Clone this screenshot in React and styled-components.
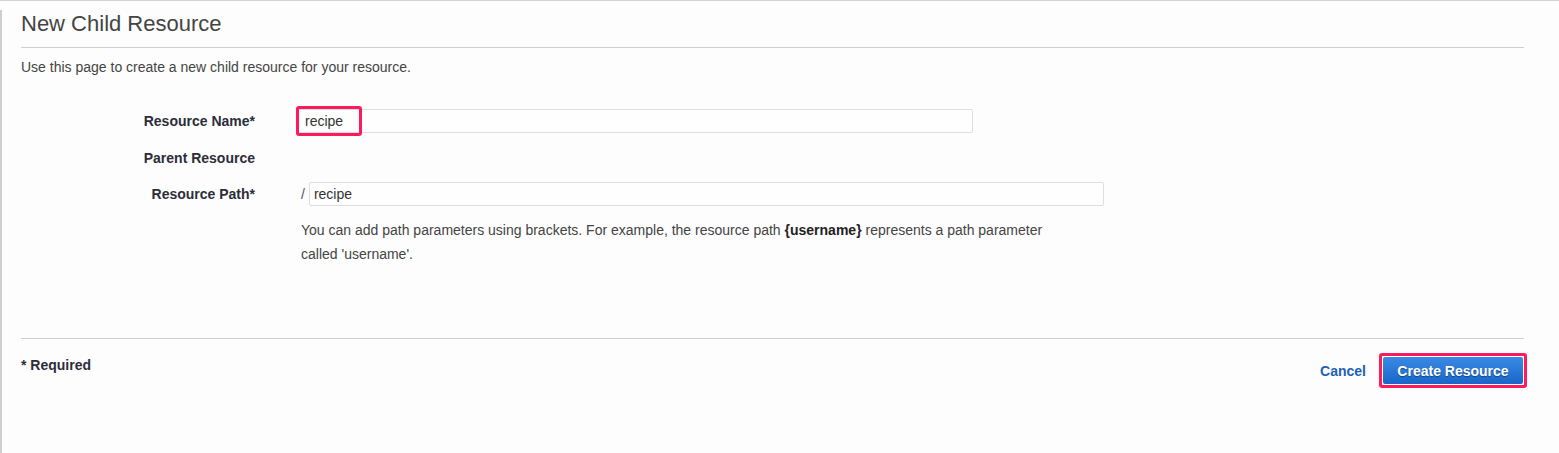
import styled, { createGlobalStyle } from "styled-components";

const GlobalStyle = createGlobalStyle`
  html, body {
    margin: 0;
    padding: 0;
    background: #fcfdfc;
    font-family: "Liberation Sans", Arial, sans-serif;
    color: #444;
  }
`;

const App = () => {
  return (
    <Page>
      <GlobalStyle />
      <Panel>
        <Title>New Child Resource</Title>
        <Intro>Use this page to create a new child resource for your resource.</Intro>
        <Form>
          <Label>Resource Name*</Label>
          <Field $height="38px">
            <Input $width="676px">
              <Highlight>recipe</Highlight>
            </Input>
          </Field>

          <Label>Parent Resource</Label>
          <Field $height="36px" />

          <Label>Resource Path*</Label>
          <Field $height="36px">
            <Slash>/</Slash>
            <Input $width="795px">
              <Value>recipe</Value>
            </Input>
          </Field>

          <span />
          <Help>
            You can add path parameters using brackets. For example, the resource path{" "}
            <b>{"{username}"}</b> represents a path parameter
            <br />
            called 'username'.
          </Help>
        </Form>
        <Footer>
          <Required>* Required</Required>
          <Actions>
            <Cancel href="#">Cancel</Cancel>
            <Outline>
              <PrimaryButton type="button">Create Resource</PrimaryButton>
            </Outline>
          </Actions>
        </Footer>
      </Panel>
    </Page>
  );
};

export default App;

const Page = styled.div`
  width: 1559px;
  height: 453px;
  border-top: 1px solid #d2d2d2;
  box-sizing: border-box;
  overflow: hidden;
`;

const Panel = styled.div`
  margin-top: 9px;
  height: 443px;
  border-left: 2px solid #cfcfcf;
  padding: 0 35px 0 19px;
`;

const Title = styled.h1`
  margin: 0;
  font-size: 22px;
  font-weight: 400;
  line-height: 28px;
  color: #444;
  padding-bottom: 9px;
  border-bottom: 1px solid #cfcfcf;
`;

const Intro = styled.p`
  margin: 11px 0 0;
  font-size: 14px;
  line-height: 17px;
  color: #444;
`;

const Form = styled.div`
  display: grid;
  grid-template-columns: 234px 1fr;
  column-gap: 42px;
  margin-top: 26px;
  align-items: center;
`;

const Label = styled.div`
  text-align: right;
  font-size: 14px;
  font-weight: 700;
  color: #2d2d3a;
`;

const Field = styled.div`
  display: flex;
  align-items: center;
  height: ${(p) => p.$height || "36px"};
`;

const Input = styled.div`
  width: ${(p) => p.$width};
  height: 24px;
  box-sizing: border-box;
  border: 1px solid #dddde2;
  border-radius: 2px;
  background: #fdfefd;
  display: flex;
  align-items: center;
  font-size: 14px;
  color: #333;
`;

const Highlight = styled.span`
  margin-left: -2px;
  width: 66px;
  height: 30px;
  box-sizing: border-box;
  border: 3px solid #ff1a5c;
  border-radius: 3px;
  padding-left: 6px;
  display: flex;
  align-items: center;
`;

const Value = styled.span`
  padding-left: 4px;
`;

const Slash = styled.span`
  font-size: 14px;
  color: #555;
  margin: 0 4px;
`;

const Help = styled.p`
  margin: 6px 0 0;
  padding-left: 4px;
  font-size: 14px;
  line-height: 24px;
  color: #444;
  b {
    color: #222;
  }
`;

const Footer = styled.div`
  margin-top: 72px;
  border-top: 1px solid #cfcfcf;
  display: flex;
  justify-content: space-between;
  align-items: flex-start;
  padding-top: 14px;
`;

const Required = styled.div`
  font-size: 14px;
  font-weight: 700;
  color: #2d2d3a;
  margin-top: 4px;
`;

const Actions = styled.div`
  display: flex;
  align-items: center;
  gap: 13px;
  margin-right: -3px;
`;

const Cancel = styled.a`
  font-size: 14px;
  font-weight: 700;
  color: #1f5fb8;
  text-decoration: none;
`;

const Outline = styled.div`
  border: 3px solid #ff1a5c;
  border-radius: 3px;
  padding: 1px;
  background: #fff;
`;

const PrimaryButton = styled.button`
  display: block;
  width: 140px;
  height: 27px;
  border: none;
  border-radius: 2px;
  background: linear-gradient(#3a8ae4, #1866c9);
  color: #fff;
  font-family: "Liberation Sans", Arial, sans-serif;
  font-size: 14px;
  font-weight: 700;
  text-shadow: 0 1px 1px rgba(0, 0, 0, 0.4);
  cursor: pointer;
`;
